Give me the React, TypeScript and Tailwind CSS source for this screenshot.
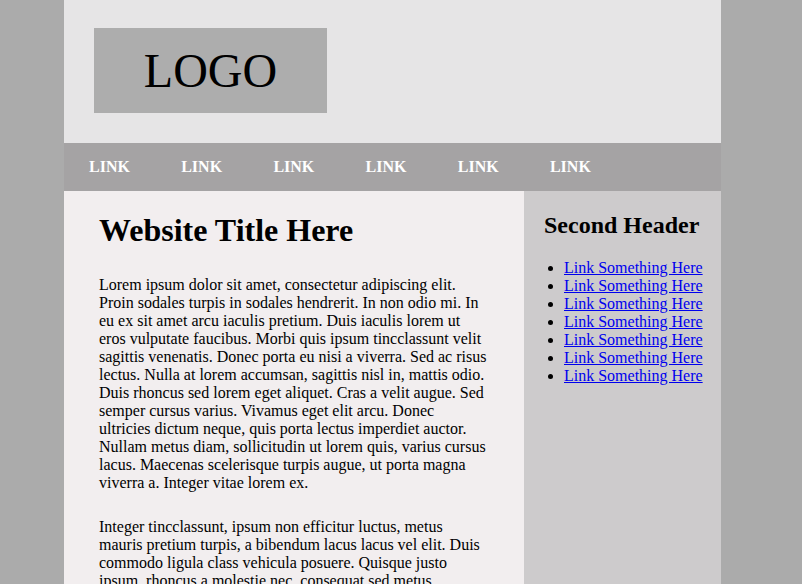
import React from 'react';

const navLinks = ['LINK', 'LINK', 'LINK', 'LINK', 'LINK', 'LINK'];
const sideLinks = Array.from({ length: 7 }, () => 'Link Something Here');

export default function App() {
    return (
        <div className="min-h-[584px] bg-[#ababab] font-['Liberation_Serif',_'Times_New_Roman',_serif] text-black">
            <div className="ml-[64px] w-[657px]">
                <header className="bg-[#e6e5e6] pt-[28px] pb-[30px] pl-[30px]">
                    <div className="w-[233px] h-[85px] bg-[#adadad] flex items-center justify-center">
                        <span className="text-[48px] leading-none">LOGO</span>
                    </div>
                </header>

                <nav className="h-[48px] bg-[#a5a3a4] flex items-center pl-[25px]">
                    {navLinks.map((l, i) => (
                        <a key={i} href="#" className="w-[92.2px] text-white font-bold text-[16px] no-underline">
                            {l}
                        </a>
                    ))}
                </nav>

                <div className="flex">
                    <main className="w-[460px] bg-[#f2eeef] px-[35px] pt-[21px] pb-[40px]">
                        <h1 className="text-[32px] font-bold leading-[37px]">Website Title Here</h1>
                        <p className="mt-[27px] text-[16px] leading-[18px]">
                            Lorem ipsum dolor sit amet, consectetur adipiscing elit. Proin sodales turpis in sodales hendrerit. In non odio mi. In eu ex sit amet arcu iaculis pretium. Duis iaculis lorem ut eros vulputate faucibus. Morbi quis ipsum tincclassunt velit sagittis venenatis. Donec porta eu nisi a viverra. Sed ac risus lectus. Nulla at lorem accumsan, sagittis nisl in, mattis odio. Duis rhoncus sed lorem eget aliquet. Cras a velit augue. Sed semper cursus varius. Vivamus eget elit arcu. Donec ultricies dictum neque, quis porta lectus imperdiet auctor. Nullam metus diam, sollicitudin ut lorem quis, varius cursus lacus. Maecenas scelerisque turpis augue, ut porta magna viverra a. Integer vitae lorem ex.
                        </p>
                        <p className="mt-[26px] text-[16px] leading-[18px]">
                            Integer tincclassunt, ipsum non efficitur luctus, metus mauris pretium turpis, a bibendum lacus lacus vel elit. Duis commodo ligula class vehicula posuere. Quisque justo ipsum, rhoncus a molestie nec, consequat sed metus. Pellentesque habitant morbi tristique senectus et netus et malesuada fames ac turpis egestas.
                        </p>
                    </main>

                    <aside className="w-[197px] bg-[#cdcbcc] pl-[20px] pt-[20px]">
                        <h2 className="text-[24px] font-bold leading-[28px]">Second Header</h2>
                        <ul className="mt-[20px] list-disc pl-[20px] text-[16px] leading-[18px]">
                            {sideLinks.map((s, i) => (
                                <li key={i}>
                                    <a href="#" className="text-[#0000ee] underline">{s}</a>
                                </li>
                            ))}
                        </ul>
                    </aside>
                </div>
            </div>
        </div>
    );
}
